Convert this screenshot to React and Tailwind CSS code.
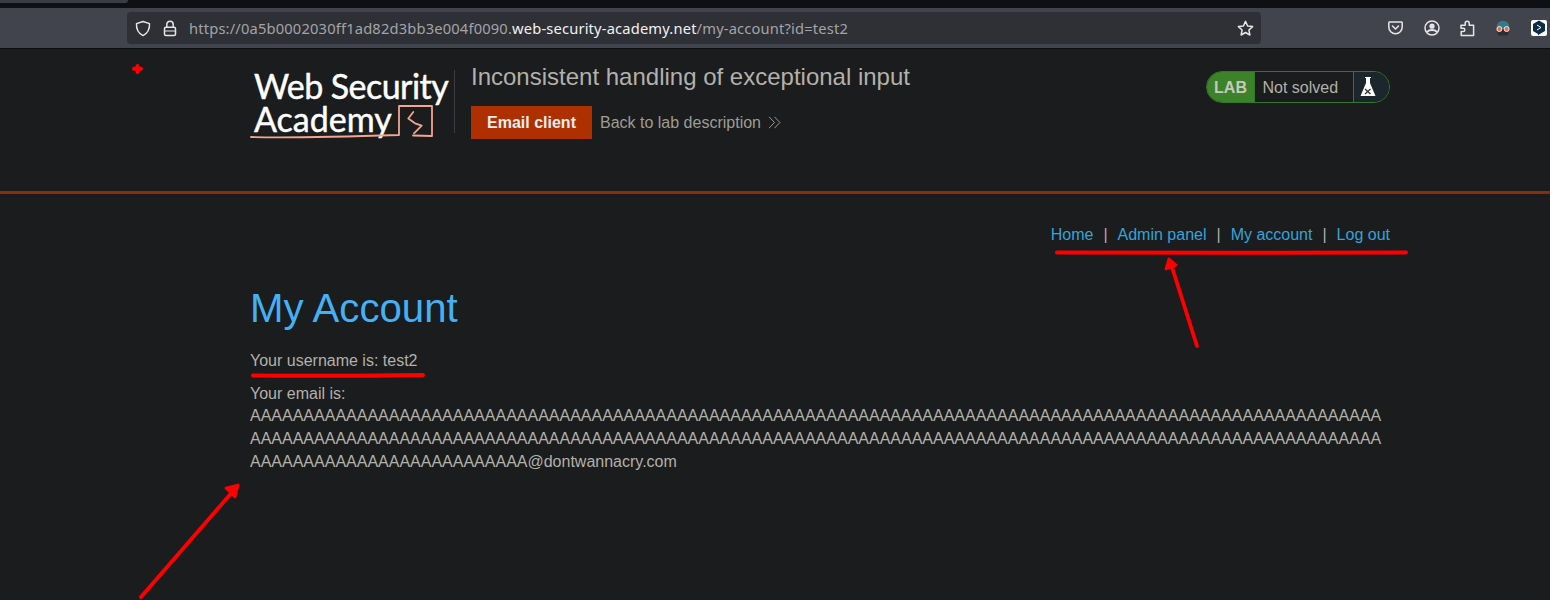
const SANS = "font-['Liberation_Sans',Arial,sans-serif]";
const A106 = "A".repeat(106);
const A26 = "A".repeat(26);

function Ic({ className = "", w = 20, h = 20, box = "0 0 20 20", children }) {
  return (
    <svg width={w} height={h} viewBox={box} fill="none" stroke="#e6e6ea" strokeWidth="1.5" strokeLinecap="round" strokeLinejoin="round" className={className}>
      {children}
    </svg>
  );
}

function Toolbar() {
  return (
    <div className="h-[49px] flex flex-col bg-[#0f1014]">
      <div className="h-[3px] w-[128px] bg-[#3a3c44] rounded-br-[3px] shrink-0" />
      <div className="h-[5px] shrink-0" />
      <div className="h-[41px] bg-[#42444d] border-b border-[#0c0c0e] flex items-center pl-[127px]">
        <div className="w-[1134px] h-[32px] bg-[#2e3035] rounded-[4px] flex items-center pl-[8px] pr-[7px]">
          <Ic w={16} h={17} box="0 0 16 17">
            <path d="M8 1.5 L14.5 3.6 C14.8 9 13 13 8 15.6 C3 13 1.2 9 1.5 3.6 Z" />
          </Ic>
          <Ic className="ml-[12px]" w={14} h={17} box="0 0 14 17">
            <path d="M3.8 7 V4.4 A3.2 3.2 0 0 1 10.2 4.4 V7" />
            <rect x="1.5" y="7.2" width="11" height="8.3" rx="1.5" />
            <path d="M1.5 11 H12.5" strokeWidth="1" />
          </Ic>
          <div className="ml-[12px] text-[14.7px] tracking-[0.17px] whitespace-nowrap text-[#a3a4a8] font-['Noto_Sans','Liberation_Sans',sans-serif] flex-1">
            https://0a5b0002030ff1ad82d3bb3e004f0090.<span className="text-[#f2f2f4]">web-security-academy.net</span>/my-account?id=test2
          </div>
          <Ic w={17} h={17} box="0 0 17 17">
            <path d="M8.5 1.4 L10.6 6 L15.6 6.6 L11.9 10 L12.9 15 L8.5 12.5 L4.1 15 L5.1 10 L1.4 6.6 L6.4 6 Z" />
          </Ic>
        </div>
        <div className="ml-[127px] flex items-center">
          <Ic w={15} h={14} box="0 0 15 14">
            <path d="M1.5 1 H13.5 A0.8 0.8 0 0 1 14.2 1.8 V6 A6.7 6.7 0 0 1 0.8 6 V1.8 A0.8 0.8 0 0 1 1.5 1 Z" />
            <path d="M4.5 5 L7.5 8 L10.5 5" />
          </Ic>
          <Ic className="ml-[21px]" w={16} h={16} box="0 0 16 16">
            <circle cx="8" cy="8" r="7" />
            <circle cx="8" cy="6.2" r="2.6" fill="#e6e6ea" stroke="none" />
            <path d="M3.6 11.5 C5 9.6 11 9.6 12.4 11.5" strokeWidth="2" />
          </Ic>
          <Ic className="ml-[20px]" w={15} h={17} box="0 0 15 17">
            <path d="M1 5.2 H5.2 V3.2 A2 2 0 0 1 9.2 3.2 V5.2 H13.6 V15.5 H1.2 V11.5 H3.2 A1.6 1.6 0 0 0 3.2 8.3 H1 Z" />
          </Ic>
          <svg className="ml-[20px]" width="16" height="16" viewBox="0 0 16 16">
            <circle cx="8" cy="7" r="6.3" fill="#2f7d8c" />
            <rect x="2.5" y="9" width="11" height="6.5" rx="2" fill="#2a2d33" />
            <circle cx="4.4" cy="9" r="2.5" fill="#ee6a45" stroke="#e8e8e8" strokeWidth="1" />
            <circle cx="11.6" cy="9" r="2.5" fill="#ee6a45" stroke="#e8e8e8" strokeWidth="1" />
          </svg>
          <div className="ml-[20px] w-[16px] h-[16px] bg-white rounded-[2px] flex items-center justify-center">
            <svg width="14" height="16" viewBox="0 0 14 16">
              <path d="M7 0.5 L13 4 V11 L7 14.5 L6 15.5 V14 L1 11 V4 Z" fill="#0f2b46" />
              <path d="M5 5 L9 7.5 L5 10" fill="none" stroke="#fff" strokeWidth="1" />
            </svg>
          </div>
        </div>
      </div>
    </div>
  );
}

function Logo() {
  return (
    <div className="relative w-[205px] h-[72px] shrink-0 mt-[-1px] font-['Lato','Open_Sans',sans-serif] text-white [-webkit-text-stroke:0.45px_white]">
      <div className="pl-[4px] text-[34px] leading-[33px] tracking-[-0.55px] whitespace-nowrap">Web Security</div>
      <div className="pl-[4px] text-[34px] leading-[34px] tracking-[0px] whitespace-nowrap">Academy</div>
      <svg className="absolute left-0 top-0" width="205" height="72" viewBox="0 0 205 72" fill="none" stroke="#f4a58f" strokeLinejoin="round" strokeLinecap="round">
        <path d="M1 68 C40 69 100 67.5 149 66 L149 37 L182 37 L182 67 L163 66.5" strokeWidth="1.8" />
        <path d="M163.3 43 L158.3 49.5 L165 54.3 L171.7 56.7 L164 64.3" strokeWidth="1.8" />
      </svg>
    </div>
  );
}

function Flask() {
  return (
    <svg width="16" height="22" viewBox="0 0 16 22">
      <path d="M5 1 H11 V2 H10 V7 L15.5 20 H0.5 L6 7 V2 H5 Z" fill="#fff" />
      <path d="M5 13 L10.5 18 M10.5 13 L5 18" stroke="#30343a" strokeWidth="1.3" />
    </svg>
  );
}

function Header() {
  return (
    <div className="h-[145px] border-b-[3px] border-[#8a2d0a] relative">
      <div className="w-[1140px] ml-[250px] pt-[21px] flex items-start">
        <Logo />
        <div className="w-px h-[63px] bg-[#3b3d42] -ml-[1px] shrink-0" />
        <div className={`${SANS} ml-[16px]`}>
          <h2 className="text-[24px] leading-[30px] mt-[-8px] text-[#b3b1a9] whitespace-nowrap">Inconsistent handling of exceptional input</h2>
          <div className="flex items-center mt-[14px]">
            <span className="h-[33px] w-[121px] bg-[#ae2f00] text-[#eee] text-[16px] font-bold flex items-center justify-center">Email client</span>
            <span className="ml-[8px] text-[16px] text-[#9f9c94] whitespace-nowrap">Back to lab description</span>
            <svg className="ml-[7px]" width="13" height="13" viewBox="0 0 12 12" fill="none" stroke="#9f9c94" strokeWidth="0.9">
              <path d="M1 0.8 L6 6 L1 11.2 M6 0.8 L11 6 L6 11.2" />
            </svg>
          </div>
        </div>
        <div className={`${SANS} ml-auto mt-[1px] h-[32px] w-[184px] rounded-full border border-[#2f7a2a] flex items-stretch overflow-hidden`}>
          <div className="w-[47px] bg-[#3d8129] text-[#c6c9bd] font-bold text-[16px] flex items-center justify-center pt-[1px]">LAB</div>
          <div className="flex-1 border-l border-[#2f7a2a] text-[#b3b1a9] text-[16px] flex items-center pl-[7.5px] pt-[1px]">Not solved</div>
          <div className="w-[36px] border-l border-[#2f7a2a] bg-[#1c272d] flex items-center pl-[6px]"><Flask /></div>
        </div>
      </div>
    </div>
  );
}

function Main() {
  return (
    <div className={`${SANS} w-[1140px] ml-[250px] text-[16px] leading-[23px] text-[#b3b1a9]`}>
      <div className="flex justify-end pt-[29px] h-[63px] whitespace-nowrap">
        <a className="text-[#36a3d9]">Home</a>
        <span className="mx-[10px]">|</span>
        <a className="text-[#36a3d9]">Admin panel</a>
        <span className="mx-[10px]">|</span>
        <a className="text-[#36a3d9]">My account</a>
        <span className="mx-[10px]">|</span>
        <a className="text-[#36a3d9]">Log out</a>
      </div>
      <h1 className="text-[40.2px] leading-[46px] text-[#45b1f5] mt-[29px]">My Account</h1>
      <p className="mt-[17px]">Your username is: test2</p>
      <div className="mt-[10px]">
        <div className="h-[22px]">Your email is:</div>
        <div>{A106}</div>
        <div>{A106}</div>
        <div>{A26}@dontwannacry.com</div>
      </div>
    </div>
  );
}

function Annotations() {
  return (
    <svg className="absolute left-0 top-0 pointer-events-none" width="1550" height="600" viewBox="0 0 1550 600" fill="none" stroke="#ff0000" strokeLinecap="round" strokeLinejoin="round">
      <path d="M137.5 66 V72 M134 68.7 H141" strokeWidth="4" />
      <path d="M1057 252.5 C1160 253 1300 253 1406 252.5" strokeWidth="4" />
      <path d="M1197 346 L1171 264" strokeWidth="3.8" />
      <path d="M1166 269 L1169 259 L1176 265 Z" fill="#ff0000" strokeWidth="2.8" />
      <path d="M253 375.5 C310 376 370 376 423 375" strokeWidth="4" />
      <path d="M141 597 L234 490" strokeWidth="3.8" />
      <path d="M226 488 L238 485 L235 497 Z" fill="#ff0000" strokeWidth="2.8" />
    </svg>
  );
}

export default function App() {
  return (
    <div className="relative w-[1550px] h-[600px] overflow-hidden bg-[#1a1c1e]">
      <Toolbar />
      <Header />
      <Main />
      <Annotations />
    </div>
  );
}
